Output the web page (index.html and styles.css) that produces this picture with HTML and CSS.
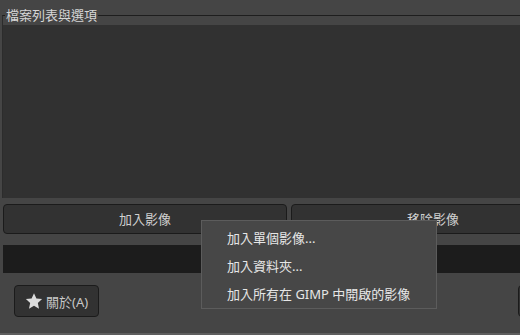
FILE: index.html
```html
<!DOCTYPE html>
<html lang="zh-Hant">
<head>
<meta charset="utf-8">
<title>檔案列表與選項</title>
<link rel="stylesheet" href="styles.css">
</head>
<body>
<div class="window">
  <div class="frame">
    <div class="frame-head"><span class="frame-label">檔案列表與選項</span></div>
    <div class="list"></div>
  </div>
  <div class="btn-row">
    <button class="btn wide">加入影像</button>
    <button class="btn wide">移除影像</button>
  </div>
  <div class="progress"></div>
  <div class="bottom-row">
    <button class="btn about">
      <svg class="star" width="18" height="18" viewBox="0 0 24 24"><path d="M12 1.5l3.2 7.1 7.6.8-5.7 5.2 1.6 7.6L12 18.3l-6.7 3.9 1.6-7.6L1.2 9.4l7.6-.8z" fill="#dcdcdc"/></svg>
      <span>關於(A)</span>
    </button>
    <div class="spacer"></div>
    <button class="btn right-btn"></button>
  </div>
  <div class="footer-line"></div>
</div>
<div class="menu">
  <div class="menu-item">加入單個影像...</div>
  <div class="menu-item">加入資料夾...</div>
  <div class="menu-item">加入所有在 GIMP 中開啟的影像</div>
</div>
</body>
</html>
```
FILE: styles.css
```css
html, body {
  margin: 0;
  padding: 0;
  background: #454545;
  overflow: hidden;
}
body {
  width: 520px;
  height: 335px;
  position: relative;
  font-family: "Noto Sans", "Noto Sans CJK TC", sans-serif;
  font-size: 13px;
  color: #d4d4d4;
}
.window {
  width: 578px;
  height: 335px;
  display: flex;
  flex-direction: column;
}
.frame {
  margin: 15px 0 0 2px;
  border-top: 1px solid #1e1e1e;
  border-left: 1px solid #2c2c2c;
}
.frame-head {
  margin-top: -8px;
  height: 14px;
  display: flex;
  align-items: center;
  padding-left: 2px;
}
.frame-label {
  background: #454545;
  padding: 0 1px;
  line-height: 14px;
  color: #d6d6d6;
}
.list {
  margin-top: 3px;
  height: 173px;
  background: #313131;
}
.btn {
  font: inherit;
  color: #cfcfcf;
  background: #323232;
  border: 1px solid #1b1b1b;
  border-radius: 4px;
  padding: 0;
  margin: 0;
}
.btn-row {
  margin-top: 6px;
  padding-left: 3px;
  display: flex;
  gap: 4px;
}
.wide {
  width: 284px;
  height: 30px;
  line-height: 28px;
}
.progress {
  margin: 11px 0 0 3px;
  height: 28px;
  background: #1c1c1c;
}
.bottom-row {
  margin-top: 12px;
  padding-left: 14px;
  display: flex;
}
.about {
  width: 85px;
  height: 32px;
  display: flex;
  align-items: center;
  padding-left: 10px;
  gap: 3px;
  color: #c8c8c8;
}
.star {
  flex: none;
}
.spacer {
  flex: 1;
}
.right-btn {
  width: 60px;
  height: 32px;
  margin-left: 418px;
}
.footer-line {
  margin-top: auto;
  height: 2px;
  background: #5e5e5e;
}
.menu {
  position: absolute;
  left: 201px;
  top: 220px;
  width: 234px;
  padding: 3px 0 0;
  background: #474747;
  border: 1px solid #5c5c5c;
}
.menu-item {
  height: 28px;
  line-height: 28px;
  padding-left: 25px;
  color: #e6e6e6;
  white-space: nowrap;
}
```
